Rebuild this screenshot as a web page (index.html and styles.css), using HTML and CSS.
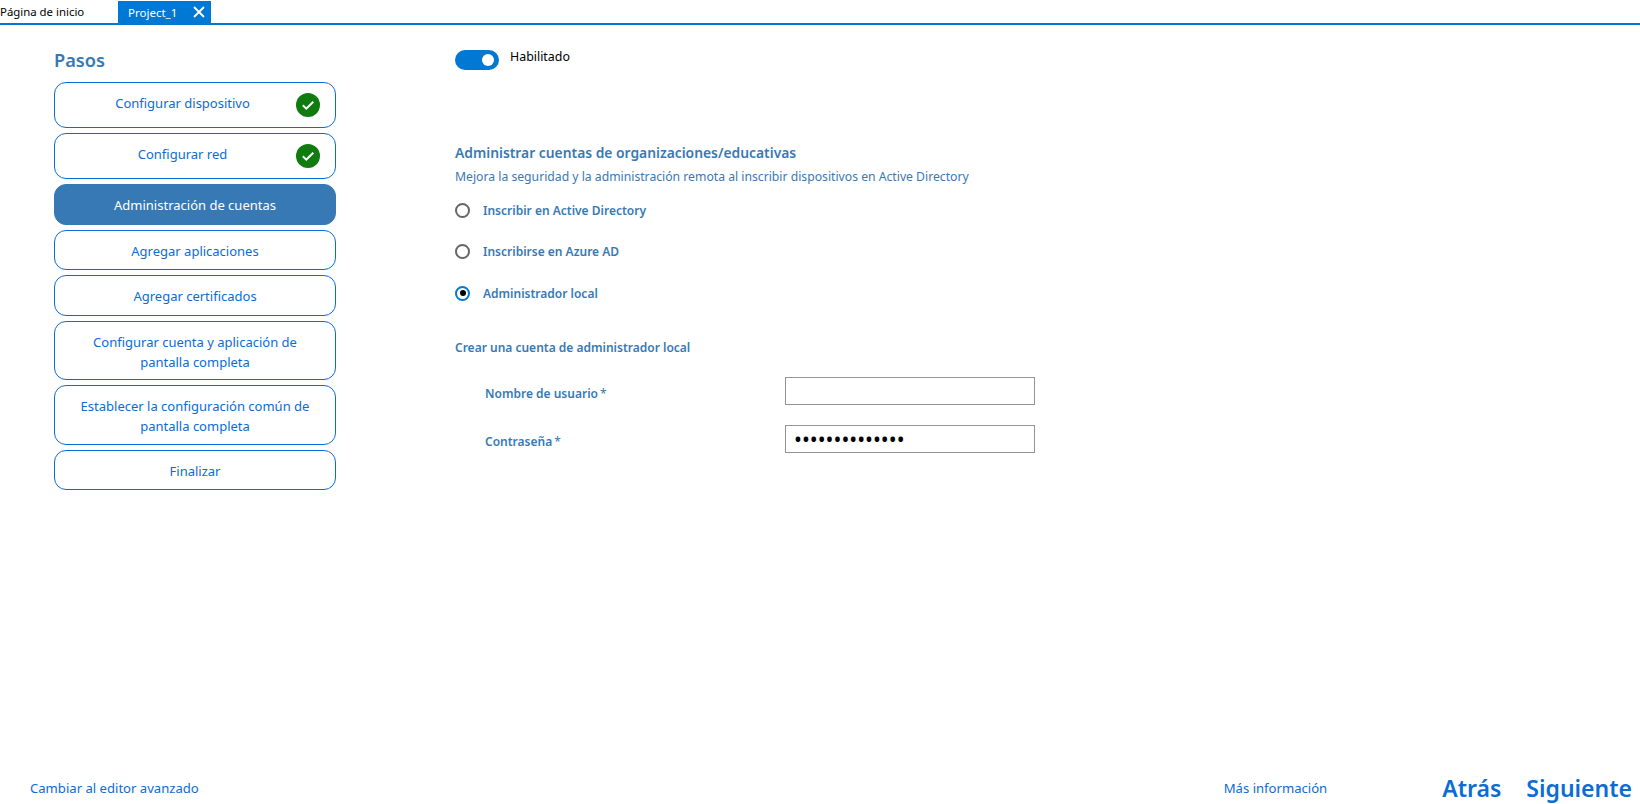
FILE: index.html
```html
<!DOCTYPE html>
<html lang="es">
<head>
<meta charset="utf-8">
<title>Project_1</title>
<link rel="stylesheet" href="styles.css">
</head>
<body>
<div class="app">
  <header class="tabs">
    <div class="tab-home">Página de inicio</div>
    <div class="tab-active">
      <span>Project_1</span>
      <svg class="tab-close" width="12" height="12" viewBox="0 0 12 12"><path d="M1 1l10 10M11 1L1 11" fill="none" stroke="#fff" stroke-width="1.8"/></svg>
    </div>
  </header>
  <main class="main">
    <nav class="steps">
      <h2 class="steps-title">Pasos</h2>
      <div class="step h46 done"><span>Configurar dispositivo</span>
        <svg class="check" width="24" height="24" viewBox="0 0 24 24"><circle cx="12" cy="12" r="12" fill="#107c10"/><path d="M6.8 12.3l3.5 3.4 7-7" fill="none" stroke="#fff" stroke-width="2"/></svg>
      </div>
      <div class="step h46 done"><span>Configurar red</span>
        <svg class="check" width="24" height="24" viewBox="0 0 24 24"><circle cx="12" cy="12" r="12" fill="#107c10"/><path d="M6.8 12.3l3.5 3.4 7-7" fill="none" stroke="#fff" stroke-width="2"/></svg>
      </div>
      <div class="step h41 current"><span>Administración de cuentas</span></div>
      <div class="step h40"><span>Agregar aplicaciones</span></div>
      <div class="step h41 tight"><span>Agregar certificados</span></div>
      <div class="step h59"><span>Configurar cuenta y aplicación de<br>pantalla completa</span></div>
      <div class="step h60"><span>Establecer la configuración común de<br>pantalla completa</span></div>
      <div class="step h40"><span>Finalizar</span></div>
    </nav>
    <section class="content">
      <div class="toggle-row">
        <span class="toggle"><span class="knob"></span></span>
        <span class="toggle-label">Habilitado</span>
      </div>
      <h3 class="section-title">Administrar cuentas de organizaciones/educativas</h3>
      <p class="section-sub">Mejora la seguridad y la administración remota al inscribir dispositivos en Active Directory</p>
      <div class="radios">
        <div class="radio-row"><span class="radio"></span><span class="radio-label">Inscribir en Active Directory</span></div>
        <div class="radio-row"><span class="radio"></span><span class="radio-label">Inscribirse en Azure AD</span></div>
        <div class="radio-row"><span class="radio selected"></span><span class="radio-label">Administrador local</span></div>
      </div>
      <h4 class="form-title">Crear una cuenta de administrador local</h4>
      <div class="form">
        <label class="field-label">Nombre de usuario<span class="req">*</span></label>
        <input class="field" type="text">
        <label class="field-label">Contraseña<span class="req">*</span></label>
        <input class="field secret" type="password" value="abcdefghijklmn">
      </div>
    </section>
  </main>
  <footer class="footer">
    <a class="link adv">Cambiar al editor avanzado</a>
    <a class="link more">Más información</a>
    <a class="big back">Atrás</a>
    <a class="big next">Siguiente</a>
  </footer>
</div>
</body>
</html>
```
FILE: styles.css
```css
* { box-sizing: border-box; }
html, body { margin: 0; padding: 0; background: #fff; }
body { font-family: "Noto Sans", "Open Sans", sans-serif; font-size: 13px; color: #000; overflow: hidden; }
.app { width: 1640px; height: 804px; display: flex; flex-direction: column; }

.tabs { height: 25px; flex: none; display: flex; align-items: flex-end; border-bottom: 2px solid #0078d4; }
.tab-home { width: 118px; height: 23px; line-height: 23px; font-size: 11.4px; white-space: nowrap; }
.tab-active { width: 93px; height: 22px; background: #0078d4; color: #fff; display: flex; align-items: center; padding-left: 10px; font-size: 11.5px; }
.tab-close { margin-left: auto; margin-right: 6px; }

.main { flex: 1; display: flex; min-height: 0; }
.steps { width: 282px; margin-left: 54px; padding-top: 22px; display: flex; flex-direction: column; gap: 5px; flex: none; }
.steps-title { margin: 0 0 4px; height: 26px; font-size: 18.2px; line-height: 26px; font-weight: 600; color: #3779b5; }
.step { position: relative; border: 1.5px solid #0a6cd6; border-radius: 12px; color: #0a6cd6; display: flex; align-items: center; justify-content: center; text-align: center; font-size: 13px; line-height: 20px; background: #fff; flex: none; padding-top: 2px; }
.h46 { height: 46px; }
.h41 { height: 41px; }
.h40 { height: 40px; }
.h59 { height: 59px; }
.h60 { height: 60px; }
.step.done { padding-right: 25px; padding-top: 0; }
.step.done span { margin-top: -5px; }
.step.current, .step.tight { padding-top: 0; }
.step.current { background: #3779b5; border-color: #3779b5; color: #fff; }
.check { position: absolute; right: 15px; top: 10px; }

.content { margin-left: 119px; flex: 1; display: flex; flex-direction: column; align-items: flex-start; }
.toggle-row { margin-top: 25px; display: flex; align-items: flex-start; height: 20px; }
.toggle { width: 44px; height: 20px; border-radius: 10px; background: #0078d4; position: relative; display: block; }
.knob { position: absolute; right: 5px; top: 4px; width: 12px; height: 12px; border-radius: 50%; background: #fff; }
.toggle-label { margin-left: 11px; font-size: 12.4px; line-height: 14px; }
.section-title { margin: 73px 0 0; font-size: 13.85px; line-height: 20px; font-weight: 600; color: #3779b5; }
.section-sub { margin: 5px 0 0; font-size: 12.2px; line-height: 18px; color: #3779b5; }
.radios { margin-top: 14px; display: flex; flex-direction: column; gap: 21.5px; }
.radio-row { display: flex; align-items: center; height: 20px; }
.radio { width: 15px; height: 15px; border: 2px solid #666; border-radius: 50%; display: block; background: #fff; position: relative; }
.radio.selected { border-color: #0078d4; }
.radio.selected::after { content: ""; position: absolute; left: 2.5px; top: 2.5px; width: 6px; height: 6px; background: #000; border-radius: 50%; }
.radio-label { margin-left: 13px; font-size: 12px; font-weight: 600; color: #3779b5; }
.form-title { margin: 36px 0 0; font-size: 12px; line-height: 18px; font-weight: 600; color: #3779b5; }
.form { margin: 20px 0 0 30px; display: grid; grid-template-columns: 300px 250px; row-gap: 20px; align-items: center; }
.field-label { font-size: 12px; font-weight: 600; color: #3779b5; padding-top: 5px; }
.req { margin-left: 2px; font-weight: 400; }
.field { width: 250px; height: 28px; border: 1px solid #949494; border-radius: 0; background: #fff; padding: 0 8px; outline: none; font-size: 13px; font-family: inherit; }
.secret { font-size: 21px; }

.footer { height: 36px; flex: none; display: flex; align-items: center; padding: 4px 8px 0 30px; }
.link { font-size: 13.1px; color: #0a6cd6; }
.more { margin-left: auto; margin-right: 115px; }
.big { font-size: 23px; line-height: 30px; font-weight: 600; color: #0a6cd6; }
.next { margin-left: 25px; }
```
